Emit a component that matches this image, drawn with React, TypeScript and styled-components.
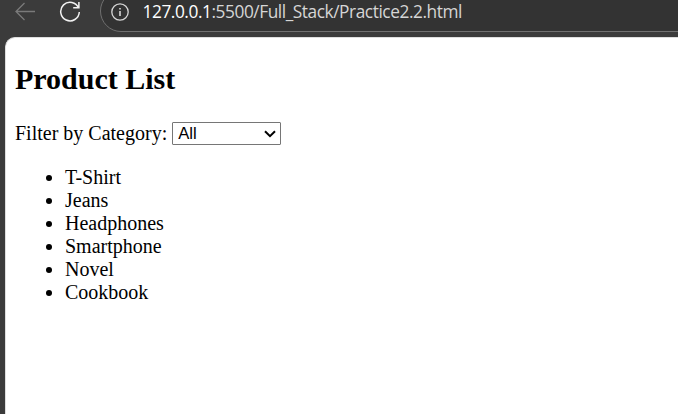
import React from 'react';
import styled, { createGlobalStyle } from 'styled-components';

const GlobalStyle = createGlobalStyle`
  * { box-sizing: border-box; }
  body { margin: 0; overflow: hidden; background: #3b3b3b; }
`;

const Browser = styled.div`
  height: 414px;
  display: flex;
  flex-direction: column;
  overflow: hidden;
  background: #3b3b3b;
`;

const Toolbar = styled.header`
  height: 37px;
  flex: none;
  display: flex;
  align-items: flex-start;
  padding-left: 2px;
  overflow: hidden;
`;

const NavButton = styled.button<{ $dim?: boolean }>`
  width: 45px;
  height: 24px;
  flex: none;
  margin: 0;
  padding: 0;
  border: 0;
  display: flex;
  align-items: center;
  justify-content: center;
  background: transparent;
  color: ${p => (p.$dim ? '#7a7a7a' : '#f2f2f2')};
`;

const AddressBar = styled.div`
  height: 42px;
  flex: none;
  width: 640px;
  margin: -10px 0 0 8px;
  padding: 2px 0 0 9px;
  display: flex;
  align-items: center;
  border: 1px solid #707070;
  border-radius: 21px;
  background: #333333;
  color: #d6d6d6;
`;

const Url = styled.span`
  margin-left: 12.5px;
  font: 17.3px/24px "Open Sans", sans-serif;
  letter-spacing: -0.44px;
  white-space: nowrap;
`;

const Host = styled.span`
  color: #ffffff;
`;

const Page = styled.main`
  flex: 1;
  margin-left: 5px;
  padding: 23px 9px;
  border: solid #dedede;
  border-width: 1px 0 0 1px;
  border-radius: 10px 0 0 0;
  background: #ffffff;
  color: #000000;
  font: 20px/23px "Liberation Serif", serif;
`;

const Title = styled.h2`
  margin: 0;
  font-size: 30px;
  line-height: 36px;
`;

const Filter = styled.div`
  display: flex;
  align-items: center;
  margin-top: 24px;
  height: 24px;
`;

const SelectWrap = styled.div`
  position: relative;
  margin: 1px 0 0 5px;
  height: 23px;
`;

const Select = styled.select`
  display: block;
  appearance: none;
  width: 109px;
  height: 23px;
  padding: 0 20px 0 5px;
  border: 1px solid #767676;
  border-radius: 1px;
  background: #ffffff;
  color: #000000;
  font: 16.67px/21px "Liberation Sans", sans-serif;
`;

const Chevron = styled.svg`
  position: absolute;
  right: 5px;
  top: 8px;
  pointer-events: none;
`;

const Products = styled.ul`
  margin: 21px 0 20px;
  padding-left: 50px;
`;

const products = ['T-Shirt', 'Jeans', 'Headphones', 'Smartphone', 'Novel', 'Cookbook'];

export default function App() {
  return (
    <Browser>
      <GlobalStyle />
      <Toolbar>
        <NavButton $dim aria-label="Back">
          <svg width="22" height="22" viewBox="0 0 22 22" fill="none" stroke="currentColor" strokeWidth="1.3"><path d="M21 10.5H2M10.5 2L2 10.5L10.5 19" /></svg>
        </NavButton>
        <NavButton aria-label="Reload">
          <svg width="22" height="22" viewBox="0 0 22 22" fill="none" stroke="currentColor" strokeWidth="1.5"><path d="M19.6 7A9.3 9.3 0 1 0 20.3 11M19.9 1V6.7H14.2" /></svg>
        </NavButton>
        <AddressBar>
          <svg width="20" height="20" viewBox="0 0 20 20" fill="none" stroke="currentColor" strokeWidth="1.3"><circle cx="10" cy="10" r="8.2" /><path d="M10 9V14M10 6V7.5" strokeWidth="1.6" /></svg>
          <Url><Host>127.0.0.1</Host>:5500/Full_Stack/Practice2.2.html</Url>
        </AddressBar>
      </Toolbar>
      <Page>
        <Title>Product List</Title>
        <Filter>
          <label htmlFor="category">Filter by Category:</label>
          <SelectWrap>
            <Select id="category" defaultValue="All">
              <option>All</option><option>Clothing</option><option>Electronics</option><option>Books</option>
            </Select>
            <Chevron width="12" height="8" viewBox="0 0 12 8" fill="none" stroke="#000" strokeWidth="2"><path d="M1 1.2L6 6.2L11 1.2" /></Chevron>
          </SelectWrap>
        </Filter>
        <Products>{products.map(p => <li key={p}>{p}</li>)}</Products>
      </Page>
    </Browser>
  );
}
